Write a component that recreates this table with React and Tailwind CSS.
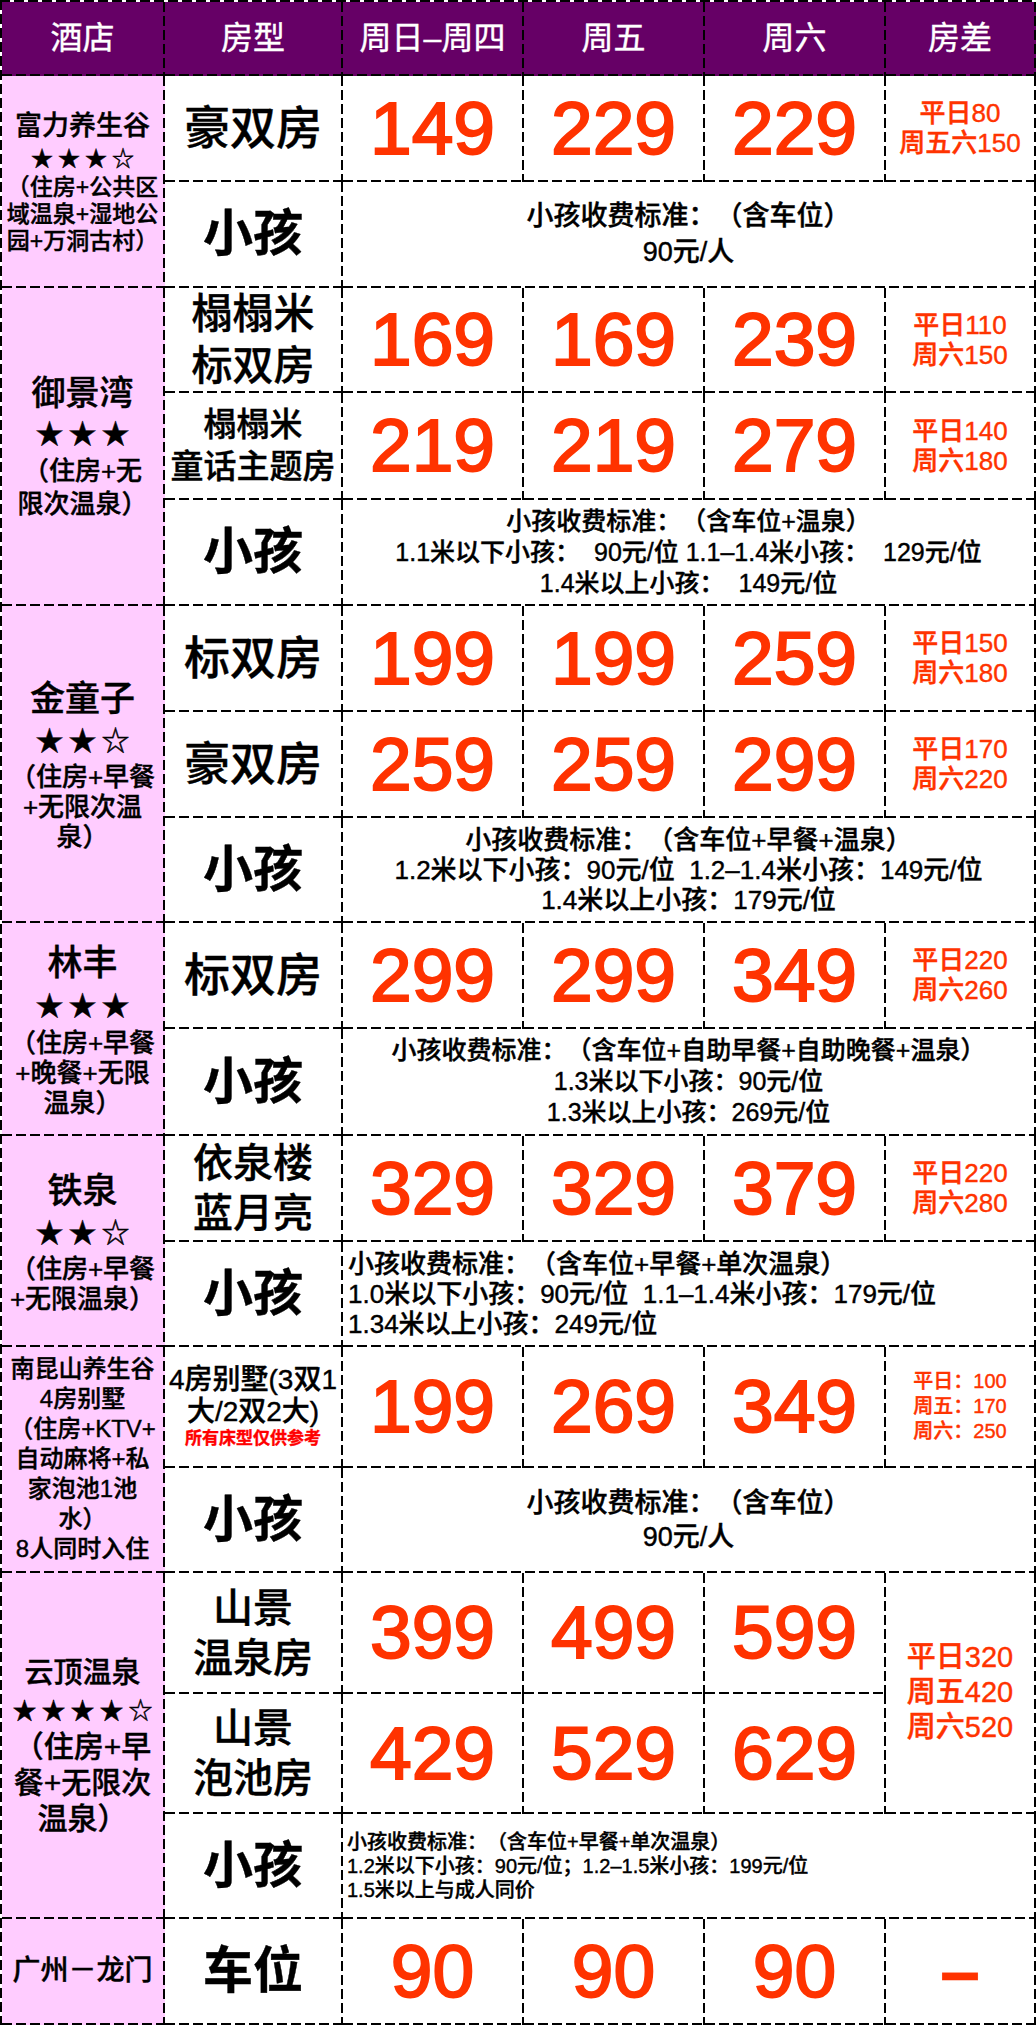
import React from 'react';

// dashed right + bottom edge drawn as gradients (10px dash, 4px gap like the sheet)
const EDGES =
  "bg-no-repeat [background-image:repeating-linear-gradient(to_right,#000_0_10px,transparent_10px_14px),repeating-linear-gradient(to_bottom,#000_0_10px,transparent_10px_14px)] [background-size:100%_2px,2px_100%] [background-position:left_bottom,right_top]";

const Cell = ({ className = '', children }) => (
  <div className={`pr-[2px] pb-[2px] ${EDGES} ${className}`}>{children}</div>
);

const Head = ({ children }) => (
  <Cell className="flex items-center justify-center bg-[#660066] text-[32px] font-normal text-white">{children}</Cell>
);

const Hotel = ({ className = '', children }) => (
  <Cell className={`flex flex-col items-center justify-center whitespace-nowrap bg-[#ffccff] text-center ${className}`}>{children}</Cell>
);

const Room = ({ className = '', children }) => (
  <Cell className={`flex flex-col items-center justify-center text-center ${className}`}>{children}</Cell>
);

const Kid = () => (
  <Room className="text-[50px] font-bold leading-none">小孩</Room>
);

const Price = ({ children }) => (
  <Cell className="flex items-center justify-center">
    <span className="text-[75px] font-normal leading-none text-[#ff3300] [-webkit-text-stroke:2px_#ff3300]">{children}</span>
  </Cell>
);

const Diff = ({ className = 'text-[26px] leading-[30px]', lines }) => (
  <Cell className={`flex flex-col items-center justify-center text-[#ff3300] ${className}`}>
    {lines.map((l) => (
      <div key={l}>{l}</div>
    ))}
  </Cell>
);

const Fee = ({ className = '', lines }) => (
  <Cell className={`col-span-4 flex flex-col justify-center whitespace-pre ${className}`}>
    {lines.map((l) => (
      <div key={l}>{l}</div>
    ))}
  </Cell>
);

const Stars = ({ className = 'text-[28px] leading-[40px]', children }) => (
  <div className={`tracking-[5px] pl-[5px] ${className}`}>{children}</div>
);

export default function App() {
  return (
    <div className="grid w-[1036px] grid-cols-[163px_178px_181px_181px_181px_150px] grid-rows-[74px_106px_106px_105px_107px_106px_106px_106px_105px_106px_107px_106px_105px_121px_105px_121px_120px_105px_106px] bg-white bg-no-repeat pt-[2px] pl-[2px] font-['Liberation_Sans','Noto_Sans_CJK_SC',sans-serif] font-medium text-black [text-spacing-trim:space-all] [-webkit-text-stroke:0.4px] [background-image:repeating-linear-gradient(to_right,#000_0_10px,transparent_10px_14px),repeating-linear-gradient(to_bottom,#000_0_10px,transparent_10px_14px)] [background-size:100%_2px,2px_100%] [background-position:left_top,left_top]">
      <Head>酒店</Head>
      <Head>房型</Head>
      <Head>周日–周四</Head>
      <Head>周五</Head>
      <Head>周六</Head>
      <Head>房差</Head>

      {/* 富力养生谷 */}
      <Hotel className="row-span-2">
        <div className="text-[27px] leading-[36px]">富力养生谷</div>
        <Stars className="text-[22px] leading-[30px]">★★★☆</Stars>
        <div className="text-[23px] leading-[27px]">
          <div>（住房+公共区</div>
          <div>域温泉+湿地公</div>
          <div>园+万洞古村）</div>
        </div>
      </Hotel>
      <Room className="text-[46px] leading-none">豪双房</Room>
      <Price>149</Price>
      <Price>229</Price>
      <Price>229</Price>
      <Diff lines={['平日80', '周五六150']} />
      <Kid />
      <Fee className="items-center text-[27px] leading-[36px]" lines={['小孩收费标准：（含车位）', '90元/人']} />

      {/* 御景湾 */}
      <Hotel className="row-span-3">
        <div className="text-[34px] leading-[44px]">御景湾</div>
        <Stars>★★★</Stars>
        <div className="text-[26px] leading-[33px]">
          <div>（住房+无</div>
          <div>限次温泉）</div>
        </div>
      </Hotel>
      <Room className="text-[41px] leading-[52px]">
        <div>榻榻米</div>
        <div>标双房</div>
      </Room>
      <Price>169</Price>
      <Price>169</Price>
      <Price>239</Price>
      <Diff lines={['平日110', '周六150']} />
      <Room className="text-[33px] leading-[42px]">
        <div>榻榻米</div>
        <div>童话主题房</div>
      </Room>
      <Price>219</Price>
      <Price>219</Price>
      <Price>279</Price>
      <Diff lines={['平日140', '周六180']} />
      <Kid />
      <Fee
        className="items-center text-[25px] leading-[31px]"
        lines={['小孩收费标准：（含车位+温泉）', '1.1米以下小孩：  90元/位 1.1–1.4米小孩：  129元/位', '1.4米以上小孩：  149元/位']}
      />

      {/* 金童子 */}
      <Hotel className="row-span-3">
        <div className="text-[35px] leading-[46px]">金童子</div>
        <Stars>★★☆</Stars>
        <div className="text-[26px] leading-[30px]">
          <div>（住房+早餐</div>
          <div>+无限次温</div>
          <div>泉）</div>
        </div>
      </Hotel>
      <Room className="text-[46px] leading-none">标双房</Room>
      <Price>199</Price>
      <Price>199</Price>
      <Price>259</Price>
      <Diff lines={['平日150', '周六180']} />
      <Room className="text-[46px] leading-none">豪双房</Room>
      <Price>259</Price>
      <Price>259</Price>
      <Price>299</Price>
      <Diff lines={['平日170', '周六220']} />
      <Kid />
      <Fee
        className="items-center text-[26px] leading-[30px]"
        lines={['小孩收费标准：（含车位+早餐+温泉）', '1.2米以下小孩：90元/位  1.2–1.4米小孩：149元/位', '1.4米以上小孩：179元/位']}
      />

      {/* 林丰 */}
      <Hotel className="row-span-2">
        <div className="text-[35px] leading-[46px]">林丰</div>
        <Stars className="text-[28px] leading-[42px]">★★★</Stars>
        <div className="text-[26px] leading-[30px]">
          <div>（住房+早餐</div>
          <div>+晚餐+无限</div>
          <div>温泉）</div>
        </div>
      </Hotel>
      <Room className="text-[46px] leading-none">标双房</Room>
      <Price>299</Price>
      <Price>299</Price>
      <Price>349</Price>
      <Diff lines={['平日220', '周六260']} />
      <Kid />
      <Fee
        className="items-center text-[25px] leading-[31px]"
        lines={['小孩收费标准：（含车位+自助早餐+自助晚餐+温泉）', '1.3米以下小孩：90元/位', '1.3米以上小孩：269元/位']}
      />

      {/* 铁泉 */}
      <Hotel className="row-span-2">
        <div className="text-[35px] leading-[46px]">铁泉</div>
        <Stars>★★☆</Stars>
        <div className="text-[26px] leading-[30px]">
          <div>（住房+早餐</div>
          <div>+无限温泉）</div>
        </div>
      </Hotel>
      <Room className="text-[40px] leading-[50px]">
        <div>依泉楼</div>
        <div>蓝月亮</div>
      </Room>
      <Price>329</Price>
      <Price>329</Price>
      <Price>379</Price>
      <Diff lines={['平日220', '周六280']} />
      <Kid />
      <Fee
        className="items-start pl-[5px] text-[26px] leading-[30px]"
        lines={['小孩收费标准：（含车位+早餐+单次温泉）', '1.0米以下小孩：90元/位  1.1–1.4米小孩：179元/位', '1.34米以上小孩：249元/位']}
      />

      {/* 南昆山养生谷 */}
      <Hotel className="row-span-2 text-[24px] leading-[30px]">
        <div>南昆山养生谷</div>
        <div>4房别墅</div>
        <div>（住房+KTV+</div>
        <div>自动麻将+私</div>
        <div>家泡池1池</div>
        <div>水）</div>
        <div>8人同时入住</div>
      </Hotel>
      <Room className="whitespace-nowrap">
        <div className="text-[28px] leading-[32px]">4房别墅(3双1</div>
        <div className="text-[28px] leading-[32px]">大/2双2大)</div>
        <div className="text-[17px] font-bold leading-[22px] text-[#ff0000]">所有床型仅供参考</div>
      </Room>
      <Price>199</Price>
      <Price>269</Price>
      <Price>349</Price>
      <Diff className="text-[20px] leading-[25px]" lines={['平日：100', '周五：170', '周六：250']} />
      <Kid />
      <Fee className="items-center text-[27px] leading-[34px]" lines={['小孩收费标准：（含车位）', '90元/人']} />

      {/* 云顶温泉 */}
      <Hotel className="row-span-3">
        <div className="text-[29px] leading-[38px]">云顶温泉</div>
        <Stars className="text-[24px] leading-[37px] tracking-[4px]">★★★★☆</Stars>
        <div className="text-[30px] leading-[36px]">
          <div>（住房+早</div>
          <div>餐+无限次</div>
          <div>温泉）</div>
        </div>
      </Hotel>
      <Room className="text-[40px] leading-[50px]">
        <div>山景</div>
        <div>温泉房</div>
      </Room>
      <Price>399</Price>
      <Price>499</Price>
      <Price>599</Price>
      <Diff className="row-span-2 text-[29px] leading-[35px]" lines={['平日320', '周五420', '周六520']} />
      <Room className="text-[40px] leading-[50px]">
        <div>山景</div>
        <div>泡池房</div>
      </Room>
      <Price>429</Price>
      <Price>529</Price>
      <Price>629</Price>
      <Kid />
      <Fee
        className="items-start pl-[4px] text-[20px] leading-[24px]"
        lines={['小孩收费标准：（含车位+早餐+单次温泉）', '1.2米以下小孩：90元/位；1.2–1.5米小孩：199元/位', '1.5米以上与成人同价']}
      />

      {/* 广州-龙门 */}
      <Hotel>
        <div className="text-[28px]">广州－龙门</div>
      </Hotel>
      <Room className="text-[50px] font-bold leading-none">车位</Room>
      <Price>90</Price>
      <Price>90</Price>
      <Price>90</Price>
      <Cell className="flex items-center justify-center">
        <span className="text-[72px] font-bold leading-none text-[#ff3300]">–</span>
      </Cell>
    </div>
  );
}
